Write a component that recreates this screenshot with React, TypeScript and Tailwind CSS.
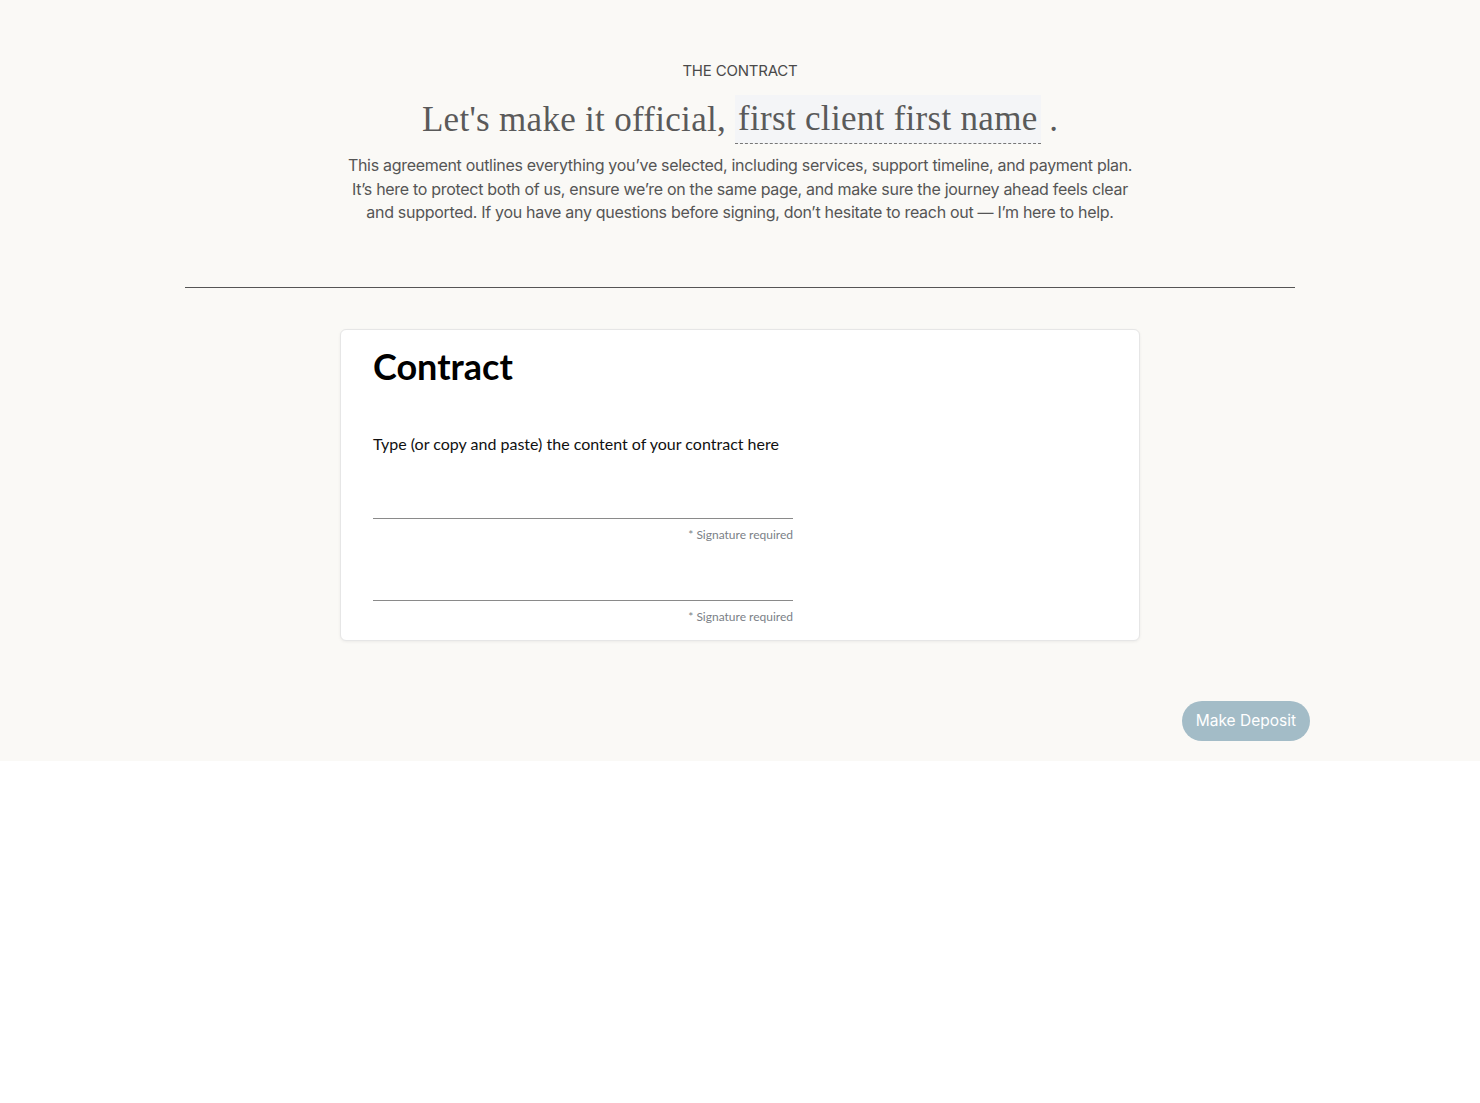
import React from 'react';

const SignatureLine: React.FC = () => (
  <div className="w-[420px]">
    <div className="h-[48px] border-b border-[#8a8a8a]" />
    <p className="mt-[8px] text-right text-[12px] leading-[16px] text-[#7b7f87]">* Signature required</p>
  </div>
);

const App: React.FC = () => {
  return (
    <div className="min-h-screen bg-white" style={{ fontFamily: 'Inter, "Noto Sans", sans-serif' }}>
      <div className="bg-[#faf9f6] pt-[61px] pb-[20px]">
        <div className="flex flex-col items-center text-center">
          <p className="text-[15px] leading-[20px] tracking-[-0.2px] text-[#4a4a4a]">THE CONTRACT</p>
          <h1
            className="mt-[14px] flex items-end text-[35px] leading-[48px] font-light text-[#5a5a5a]"
            style={{ fontFamily: '"Liberation Serif", "DejaVu Serif", serif' }}
          >
            <span className="tracking-[0.3px]">Let's make it official,&nbsp;</span>
            <span className="bg-[#f4f5f7] px-[3px] border-b border-dashed border-[#777] tracking-[0.3px]">
              first client first name
            </span>
            <span>&nbsp;.</span>
          </h1>
          <p className="mt-[10px] text-[16px] leading-[23.5px] tracking-[-0.3px] text-[#555555]">
            This agreement outlines everything you’ve selected, including services, support timeline, and payment plan.
            <br />
            It’s here to protect both of us, ensure we’re on the same page, and make sure the journey ahead feels clear
            <br />
            and supported. If you have any questions before signing, don’t hesitate to reach out — I’m here to help.
          </p>
        </div>

        <div className="mx-auto mt-[62px] w-[1110px] border-t border-[#555555]" />

        <div
          className="mx-auto mt-[41px] w-[800px] rounded-[6px] border border-[#e6e6e6] bg-white px-[32px] pt-[14px] pb-[15px] shadow-[0_1px_3px_rgba(0,0,0,0.06)]"
          style={{ fontFamily: 'Lato, "Open Sans", sans-serif' }}
        >
          <h2 className="text-[36px] leading-[44px] font-bold text-black">Contract</h2>
          <p className="mt-[45px] text-[16px] leading-[22px] text-[#111]">
            Type (or copy and paste) the content of your contract here
          </p>
          <div className="mt-[16px] flex flex-col gap-[10px]">
            <SignatureLine />
            <SignatureLine />
          </div>
        </div>

        <div className="mt-[60px] flex justify-end pr-[170px]">
          <button className="h-[40px] rounded-full bg-[#a3bcc7] px-[14px] text-[15.5px] text-white">
            Make Deposit
          </button>
        </div>
      </div>
    </div>
  );
};

export default App;
